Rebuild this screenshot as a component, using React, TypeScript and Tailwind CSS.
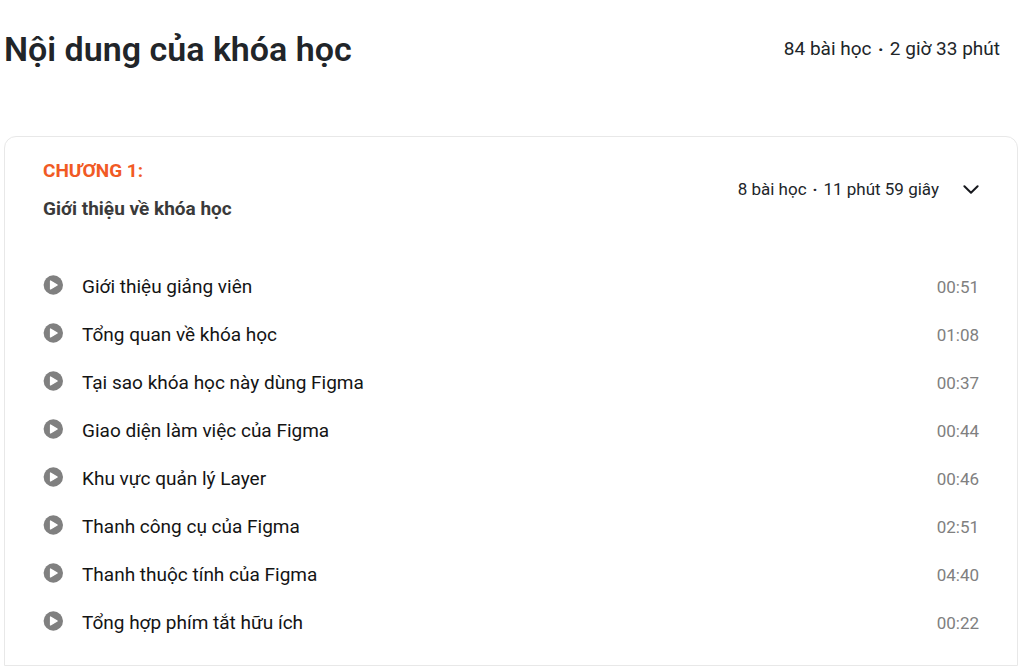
import { useState } from 'react'

interface Lesson {
  title: string
  duration: string
}

const lessons: Lesson[] = [
  { title: 'Giới thiệu giảng viên', duration: '00:51' },
  { title: 'Tổng quan về khóa học', duration: '01:08' },
  { title: 'Tại sao khóa học này dùng Figma', duration: '00:37' },
  { title: 'Giao diện làm việc của Figma', duration: '00:44' },
  { title: 'Khu vực quản lý Layer', duration: '00:46' },
  { title: 'Thanh công cụ của Figma', duration: '02:51' },
  { title: 'Thanh thuộc tính của Figma', duration: '04:40' },
  { title: 'Tổng hợp phím tắt hữu ích', duration: '00:22' },
]

function PlayIcon() {
  return (
    <svg viewBox="0 0 20 20" className="size-5 shrink-0" aria-hidden="true">
      <circle cx="10.3" cy="10" r="9.7" fill="#808080" />
      <path
        d="M7.5 6v8l6.7-4z"
        fill="#fff"
        stroke="#fff"
        strokeWidth="1.2"
        strokeLinejoin="round"
      />
    </svg>
  )
}

function ChevronIcon({ open }: { open: boolean }) {
  return (
    <svg viewBox="0 0 16 16" className={`size-4 shrink-0 ${open ? '' : '-rotate-90'}`} aria-hidden="true">
      <path
        d="M1.4 5.2 8 11.8l6.6-6.6"
        fill="none"
        stroke="#16181d"
        strokeWidth="2"
        strokeLinecap="round"
        strokeLinejoin="round"
      />
    </svg>
  )
}

function Dot() {
  return <span className="mx-[2px] font-bold">‧</span>
}

function LessonRow({ title, duration }: Lesson) {
  return (
    <li className="flex h-12 items-center justify-between">
      <a href="#" className="flex items-center gap-[19px] pb-px">
        <PlayIcon />
        <span className="pt-1 text-[19px] leading-6 text-[#141414]">{title}</span>
      </a>
      <span className="pt-[3px] text-[17px] leading-6 text-[#808080]">{duration}</span>
    </li>
  )
}

export default function App() {
  const [open, setOpen] = useState(true)

  return (
    <main className="bg-white pr-[2px] pl-1 font-['Roboto',sans-serif]">
      <header className="flex items-center justify-between pt-[25px] pr-[18px]">
        <h1 className="text-[34px] leading-12 font-semibold text-[#212529]">Nội dung của khóa học</h1>
        <p className="text-[19px] leading-6 text-[#212529]">
          84 bài học <Dot /> 2 giờ 33 phút
        </p>
      </header>

      <section className="mt-[63px] rounded-t-xl border border-[#e8e8e8] px-[38px] pb-5">
        <button
          type="button"
          aria-expanded={open}
          onClick={() => setOpen(!open)}
          className="flex w-full items-center justify-between pt-[15px] text-left"
        >
          <span className="flex flex-col">
            <span className="text-[19px] leading-[38px] font-bold text-[#f15a24]">CHƯƠNG 1:</span>
            <span className="text-[19px] leading-[38px] font-bold text-[#3a3a3a]">
              Giới thiệu về khóa học
            </span>
          </span>
          <span className="flex items-center gap-6 pb-[2px]">
            <span className="text-[17px] leading-6 text-[#212529]">
              8 bài học <Dot /> 11 phút 59 giây
            </span>
            <ChevronIcon open={open} />
          </span>
        </button>

        {open && (
          <ul className="mt-[33px]">
            {lessons.map((lesson) => (
              <LessonRow key={lesson.title} {...lesson} />
            ))}
          </ul>
        )}
      </section>
    </main>
  )
}
